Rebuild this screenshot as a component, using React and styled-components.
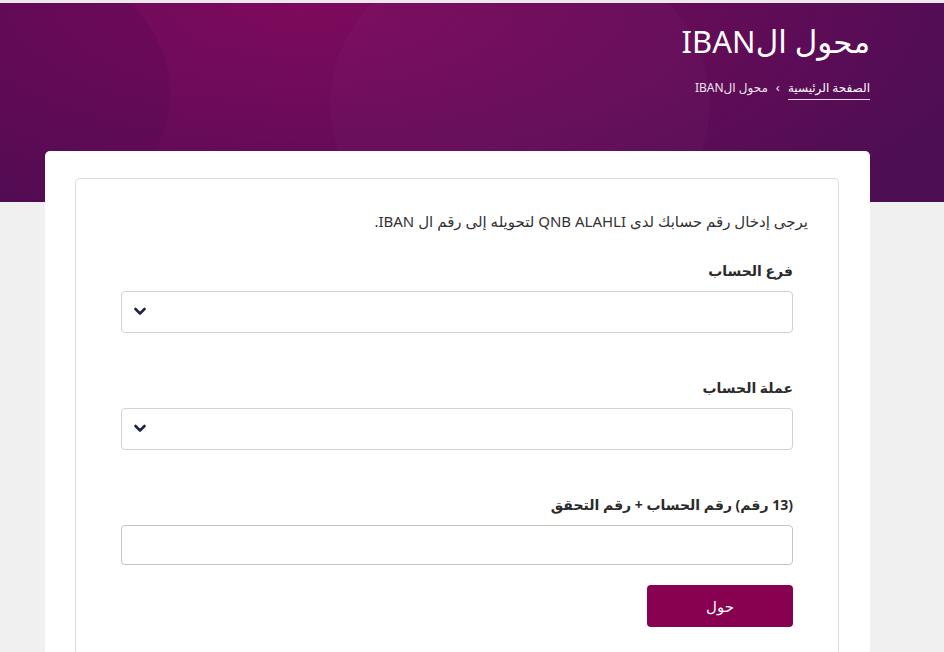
import React from "react";
import styled, { createGlobalStyle } from "styled-components";

const GlobalStyle = createGlobalStyle`
  html, body {
    margin: 0;
    padding: 0;
    background: #f0f0f0;
  }
  body {
    font-family: "Noto Sans", "DejaVu Sans", sans-serif;
    direction: rtl;
    color: #333;
  }
  * {
    box-sizing: border-box;
  }
`;

const TopLine = styled.div`
  height: 3px;
  background: #ebe8ee;
`;

const Hero = styled.header`
  position: relative;
  overflow: hidden;
  height: 199px;
  background: radial-gradient(
    ellipse 75% 140% at 32% 0%,
    #7e0a5c 0%,
    #6a0b59 45%,
    #4e0e53 100%
  );

  &::before {
    content: "";
    position: absolute;
    left: -120px;
    top: -40px;
    width: 290px;
    height: 260px;
    border-radius: 50%;
    background: rgba(60, 10, 70, 0.14);
  }

  &::after {
    content: "";
    position: absolute;
    left: 330px;
    top: -60px;
    width: 380px;
    height: 320px;
    border-radius: 50%;
    background: rgba(255, 255, 255, 0.02);
  }
`;

const HeroInner = styled.div`
  position: relative;
  z-index: 1;
  width: 825px;
  margin: 0 74px 0 45px;
  padding-top: 16px;
  display: flex;
  flex-direction: column;
  align-items: flex-start;
`;

const Title = styled.h1`
  margin: 0;
  font-size: 31px;
  font-weight: 400;
  color: #fff;
  line-height: 44px;
`;

const Crumbs = styled.nav`
  margin-top: 12px;
  display: flex;
  align-items: center;
  gap: 8px;
  font-size: 12px;
  color: #f1e4ef;
`;

const CrumbLink = styled.a`
  color: #fff;
  text-decoration: none;
  padding-bottom: 3px;
  border-bottom: 1px solid #f3d9ec;
  margin-top: 4px;
`;

const CrumbSep = styled.span`
  font-size: 13px;
  line-height: 1;
`;

const Container = styled.main`
  position: relative;
  z-index: 2;
  width: 825px;
  margin: -51px 74px 0 45px;
  background: #fff;
  border-radius: 5px 5px 0 0;
  padding: 27px 31px 0 30px;
`;

const Box = styled.section`
  border: 1px solid #dcdcdc;
  border-bottom: none;
  border-radius: 5px 5px 0 0;
  padding: 32px 30px 30px;
  min-height: 480px;
`;

const Intro = styled.p`
  margin: 0 0 30px;
  font-size: 15px;
  color: #333;
`;

const Form = styled.form`
  padding: 0 15px;
  display: flex;
  flex-direction: column;
`;

const Field = styled.div`
  display: flex;
  flex-direction: column;
  margin-bottom: ${(p) => p.$gap || 45}px;
`;

const Label = styled.label`
  font-size: 14px;
  font-weight: 700;
  color: #2b2b2b;
  margin-bottom: 10px;
  line-height: 20px;
`;

const SelectWrap = styled.div`
  position: relative;
  height: 42px;
  border: 1px solid #d2d2d2;
  border-radius: 4px;
  background: #fff;

  svg {
    position: absolute;
    left: 12px;
    top: 15px;
  }
`;

const Input = styled.input`
  height: 40px;
  border: 1px solid #c4c4c4;
  border-radius: 4px;
  background: #fff;
  font-size: 14px;
  padding: 0 12px;
  outline: none;
`;

const Actions = styled.div`
  display: flex;
  justify-content: flex-start;
`;

const Button = styled.button`
  width: 146px;
  height: 42px;
  border: none;
  border-radius: 4px;
  background: #870150;
  color: #fff;
  font-family: inherit;
  font-size: 15px;
  cursor: pointer;
`;

const Chevron = () => (
  <svg width="12" height="9" viewBox="0 0 12 9">
    <path
      d="M1.5 2 L6 6.5 L10.5 2"
      fill="none"
      stroke="#1f2347"
      strokeWidth="2.6"
      strokeLinecap="round"
      strokeLinejoin="round"
    />
  </svg>
);

const Select = () => (
  <SelectWrap>
    <Chevron />
  </SelectWrap>
);

export default function App() {
  return (
    <>
      <GlobalStyle />
      <TopLine />
      <Hero>
        <HeroInner>
          <Title>محول الIBAN</Title>
          <Crumbs>
            <CrumbLink href="#">الصفحة الرئيسية</CrumbLink>
            <CrumbSep>›</CrumbSep>
            <span>محول الIBAN</span>
          </Crumbs>
        </HeroInner>
      </Hero>
      <Container>
        <Box>
          <Intro>يرجى إدخال رقم حسابك لدى QNB ALAHLI لتحويله إلى رقم ال IBAN.</Intro>
          <Form onSubmit={(e) => e.preventDefault()}>
            <Field>
              <Label>فرع الحساب</Label>
              <Select />
            </Field>
            <Field>
              <Label>عملة الحساب</Label>
              <Select />
            </Field>
            <Field $gap={20}>
              <Label>(13 رقم) رقم الحساب + رقم التحقق</Label>
              <Input />
            </Field>
            <Actions>
              <Button type="submit">حول</Button>
            </Actions>
          </Form>
        </Box>
      </Container>
    </>
  );
}
